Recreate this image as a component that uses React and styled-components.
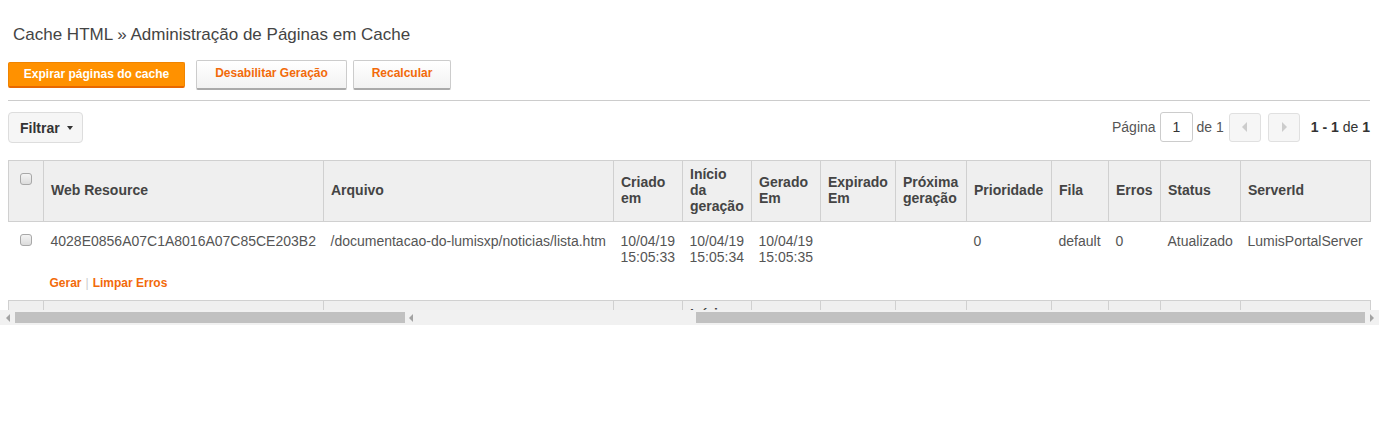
import React from 'react';
import styled, { createGlobalStyle } from 'styled-components';

const GlobalStyle = createGlobalStyle`
  body {
    margin: 0;
    background: #fff;
    font-family: "Liberation Sans", Arial, sans-serif;
  }
`;

const columns = [
  { key: 'check', width: 35 },
  { key: 'web', label: 'Web Resource', width: 280 },
  { key: 'file', label: 'Arquivo', width: 290 },
  { key: 'created', label: 'Criado em', width: 69 },
  { key: 'start', label: 'Início da geração', width: 69 },
  { key: 'generated', label: 'Gerado Em', width: 69 },
  { key: 'expired', label: 'Expirado Em', width: 75 },
  { key: 'next', label: 'Próxima geração', width: 71 },
  { key: 'priority', label: 'Prioridade', width: 85 },
  { key: 'queue', label: 'Fila', width: 57 },
  { key: 'errors', label: 'Erros', width: 52 },
  { key: 'status', label: 'Status', width: 80 },
  { key: 'server', label: 'ServerId', width: 130 },
];

const row = {
  web: '4028E0856A07C1A8016A07C85CE203B2',
  file: '/documentacao-do-lumisxp/noticias/lista.htm',
  created: ['10/04/19', '15:05:33'],
  start: ['10/04/19', '15:05:34'],
  generated: ['10/04/19', '15:05:35'],
  expired: '',
  next: '',
  priority: '0',
  queue: 'default',
  errors: '0',
  status: 'Atualizado',
  server: 'LumisPortalServer',
};

function HeaderRow() {
  return (
    <tr>
      {columns.map((c) =>
        c.key === 'check' ? (
          <CheckTh key={c.key}><Check /></CheckTh>
        ) : (
          <Th key={c.key}>{c.label}</Th>
        )
      )}
    </tr>
  );
}

export default function App() {
  return (
    <>
      <GlobalStyle />
      <Page>
        <Title>Cache HTML » Administração de Páginas em Cache</Title>
        <Toolbar>
          <PrimaryButton>Expirar páginas do cache</PrimaryButton>
          <Button $gap={11} $w={151}>Desabilitar Geração</Button>
          <Button $gap={6} $w={98}>Recalcular</Button>
        </Toolbar>
        <Divider />
        <FilterBar>
          <FilterButton>
            Filtrar
            <Caret />
          </FilterButton>
          <Pager>
            <span>Página</span>
            <PageInput>1</PageInput>
            <span>de 1</span>
            <PagerButton>
              <svg width="6" height="10" viewBox="0 0 6 10"><path d="M5 0 L0 5 L5 10 Z" fill="#ccc" /></svg>
            </PagerButton>
            <PagerButton $gap={3}>
              <svg width="6" height="10" viewBox="0 0 6 10"><path d="M1 0 L6 5 L1 10 Z" fill="#ccc" /></svg>
            </PagerButton>
            <PagerCount>
              <b>1 - 1</b> de <b>1</b>
            </PagerCount>
          </Pager>
        </FilterBar>
      </Page>
      <TableScroll>
        <Table>
          <colgroup>
            {columns.map((c) => <col key={c.key} style={{ width: c.width }} />)}
          </colgroup>
          <thead>
            <HeaderRow />
          </thead>
          <tbody>
            <tr>
              <CheckTd><Check /></CheckTd>
              {columns.slice(1).map((c) => (
                <Td key={c.key}>
                  {Array.isArray(row[c.key])
                    ? row[c.key].map((l) => <div key={l}>{l}</div>)
                    : row[c.key]}
                </Td>
              ))}
            </tr>
            <tr>
              <td />
              <ActionsTd colSpan={columns.length - 1}>
                <ActionLink>Gerar</ActionLink>
                <Sep>|</Sep>
                <ActionLink>Limpar Erros</ActionLink>
              </ActionsTd>
            </tr>
          </tbody>
          <tfoot>
            <HeaderRow />
          </tfoot>
        </Table>
      </TableScroll>
      <ScrollTrack>
        <Arrow $dir="left" />
        <Thumb $w={390} $ml={5} />
        <Arrow $dir="left" $ml={4} />
        <Thumb $w={669} $ml={283} />
        <Arrow $dir="right" $ml={5} />
      </ScrollTrack>
    </>
  );
}

const Page = styled.div`
  padding: 0 9px 0 8px;
`;

const Title = styled.h1`
  margin: 0;
  padding: 25px 0 0 5px;
  font-size: 17px;
  line-height: 20px;
  font-weight: normal;
  color: #444;
`;

const Toolbar = styled.div`
  display: flex;
  align-items: center;
  margin-top: 15px;
  height: 29px;
`;

const PrimaryButton = styled.button`
  height: 26px;
  width: 177px;
  padding: 0;
  border: 1px solid #f08400;
  border-bottom: 2px solid #e86800;
  border-radius: 2px;
  background: #ff9100;
  color: #fff;
  font-family: inherit;
  font-size: 12px;
  font-weight: bold;
`;

const Button = styled.button`
  height: 30px;
  width: ${(p) => p.$w}px;
  margin-left: ${(p) => p.$gap}px;
  padding: 0 0 2px;
  border: 1px solid #ccc;
  border-bottom: 2px solid #aaa;
  border-radius: 2px;
  background: linear-gradient(#ffffff, #f2f2f2);
  color: #f26a0a;
  font-family: inherit;
  font-size: 12px;
  font-weight: bold;
`;

const Divider = styled.div`
  margin-top: 11px;
  border-top: 1px solid #ccc;
`;

const FilterBar = styled.div`
  display: flex;
  justify-content: space-between;
  align-items: center;
  margin-top: 11px;
`;

const FilterButton = styled.button`
  display: flex;
  align-items: center;
  height: 31px;
  width: 75px;
  padding: 0 0 0 11px;
  border: 1px solid #ddd;
  border-radius: 4px;
  background: #f6f6f6;
  color: #333;
  font-family: inherit;
  font-size: 14px;
  font-weight: bold;
`;

const Caret = styled.span`
  margin-left: 7px;
  border-left: 3px solid transparent;
  border-right: 3px solid transparent;
  border-top: 4px solid #333;
`;

const Pager = styled.div`
  display: flex;
  align-items: center;
  gap: 4px;
  font-size: 14px;
  color: #555;
  margin-top: -1px;
`;

const PageInput = styled.div`
  box-sizing: border-box;
  width: 33px;
  height: 30px;
  padding-left: 12px;
  line-height: 28px;
  border: 1px solid #ccc;
  border-radius: 3px;
  color: #333;
`;

const PagerButton = styled.div`
  box-sizing: border-box;
  display: flex;
  align-items: center;
  justify-content: center;
  width: 32px;
  height: 29px;
  margin-left: ${(p) => p.$gap || 1}px;
  border: 1px solid #e0e0e0;
  border-radius: 3px;
  background: #f6f6f6;
`;

const PagerCount = styled.span`
  margin-left: 7px;
  color: #333;
`;

const TableScroll = styled.div`
  margin-top: 17px;
  height: 150px;
  overflow: hidden;
  padding: 0 9px 0 8px;
`;

const Table = styled.table`
  width: 1362px;
  border-collapse: collapse;
  table-layout: fixed;
`;

const Th = styled.th`
  padding: 5px 7px 7px;
  background: #efefef;
  border: 1px solid #d0d0d0;
  text-align: left;
  vertical-align: middle;
  font-size: 14px;
  line-height: 16px;
  color: #444;
`;

const CheckTh = styled(Th)`
  vertical-align: top;
  text-align: center;
  padding-top: 12px;
`;

const Check = styled.span`
  display: inline-block;
  box-sizing: border-box;
  width: 12px;
  height: 12px;
  border: 1px solid #a8a8a8;
  border-radius: 3px;
  background: linear-gradient(#f4f4f4, #dcdcdc);
  vertical-align: top;
`;

const Td = styled.td`
  padding: 11px 7px 8px;
  vertical-align: top;
  font-size: 14px;
  line-height: 16px;
  color: #555;
  white-space: nowrap;
`;

const CheckTd = styled(Td)`
  text-align: center;
  padding-top: 12px;
`;

const ActionsTd = styled.td`
  padding: 2px 6px 9px;
  font-size: 12px;
  line-height: 16px;
  font-weight: bold;
`;

const ActionLink = styled.a`
  color: #f26a0a;
  text-decoration: none;
`;

const Sep = styled.span`
  margin: 0 4px;
  color: #ccc;
  font-weight: normal;
`;

const ScrollTrack = styled.div`
  display: flex;
  align-items: center;
  height: 15px;
  background: #f1f1f1;
  padding-left: 6px;
`;

const Thumb = styled.div`
  width: ${(p) => p.$w}px;
  height: 11px;
  margin-left: ${(p) => p.$ml}px;
  background: #c1c1c1;
`;

const Arrow = styled.span`
  margin-left: ${(p) => p.$ml || 0}px;
  border-top: 4px solid transparent;
  border-bottom: 4px solid transparent;
  ${(p) =>
    p.$dir === 'left'
      ? 'border-right: 4px solid #a3a3a3;'
      : 'border-left: 4px solid #a3a3a3;'}
`;
